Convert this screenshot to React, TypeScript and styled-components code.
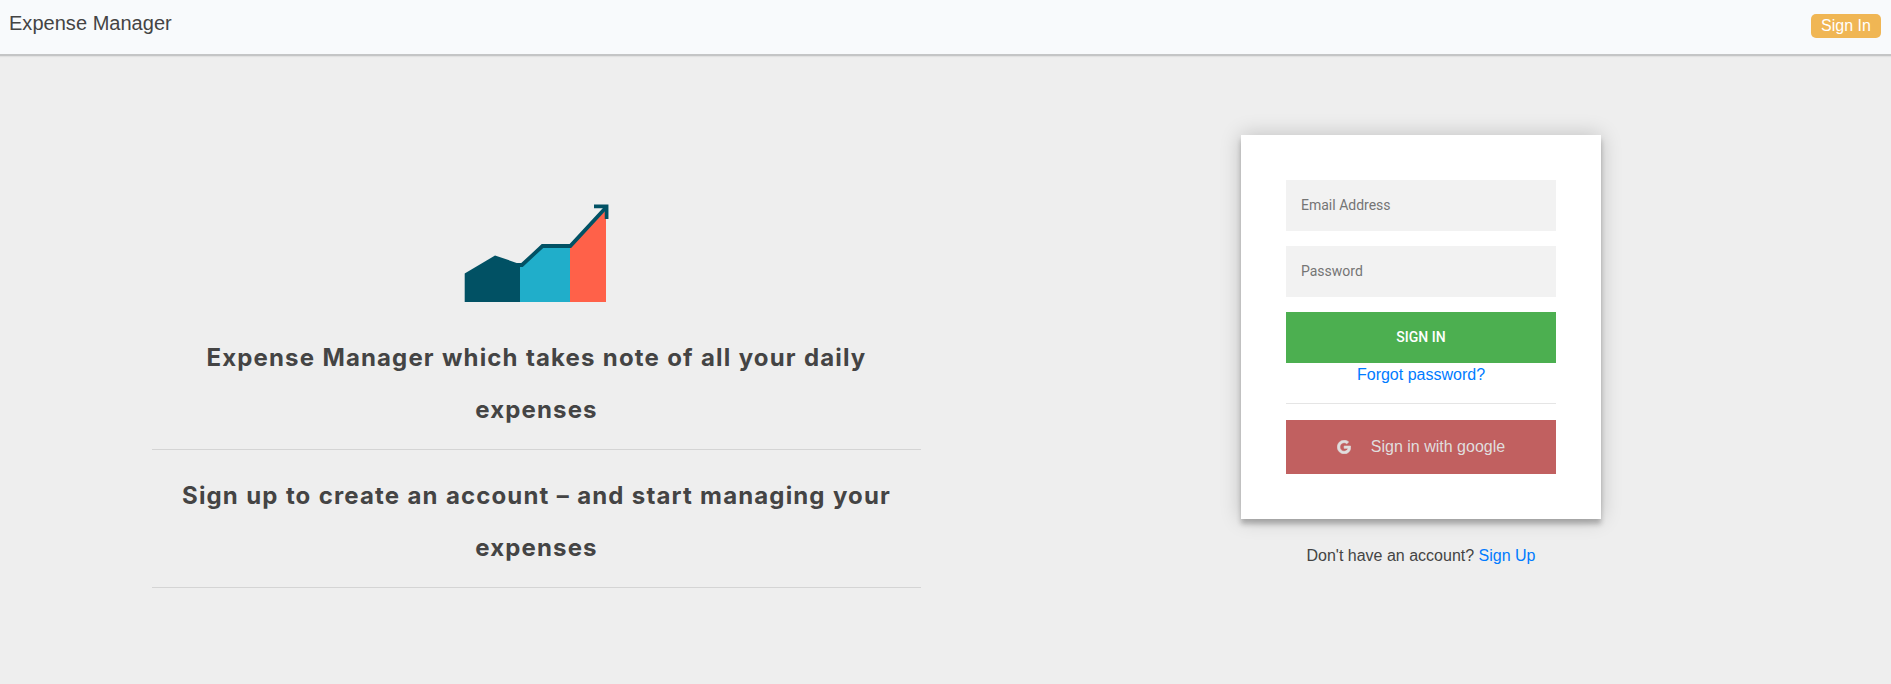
import React from 'react';
import styled, { createGlobalStyle } from 'styled-components';
import { FaGoogle } from 'react-icons/fa';

const GlobalStyle = createGlobalStyle`
  *, *::before, *::after { box-sizing: border-box; }
  body {
    margin: 0;
    background: #eee;
    color: #444;
    font: 16px/24px "Liberation Sans", Arial, sans-serif;
    overflow: hidden;
  }
`;

const Page = styled.div`
  min-height: 684px;
`;

const Header = styled.header`
  display: flex;
  justify-content: space-between;
  align-items: flex-start;
  height: 56px;
  padding: 0 10px 0 9px;
  background: #f8fafc;
  border-bottom: 2px solid #c4c5c6;
  box-shadow: 0 1px 1px rgba(0, 0, 0, 0.05);
`;

const Brand = styled.span`
  padding-top: 8px;
  font-size: 20px;
  line-height: 30px;
  letter-spacing: 0.03px;
`;

const NavButton = styled.button`
  width: 70px;
  height: 24px;
  margin-top: 14px;
  padding: 0 0 1px;
  border: 0;
  border-radius: 5px;
  background: #f0b654;
  color: #fff;
  font: 16px/22px "Liberation Sans", Arial, sans-serif;
`;

const Main = styled.main`
  display: flex;
  justify-content: space-between;
`;

const Intro = styled.section`
  display: flex;
  flex-direction: column;
  align-items: center;
  width: 769px;
  margin-left: 152px;
  padding-top: 148px;
`;

const Headline = styled.h2<{ $top: number }>`
  width: 100%;
  margin: 0;
  padding: ${(p) => p.$top}px 0 13px;
  border-bottom: 1px solid #d4d4d4;
  font: 700 24px/52px Inter, Roboto, sans-serif;
  letter-spacing: 1.13px;
  word-spacing: 0.5px;
  text-align: center;
  white-space: nowrap;
`;

const Account = styled.section`
  display: flex;
  flex-direction: column;
  align-items: center;
  width: 940px;
  padding-top: 79px;
`;

const Card = styled.form`
  display: flex;
  flex-direction: column;
  width: 360px;
  height: 384px;
  padding: 45px;
  background: #fff;
  box-shadow: 0 0 20px 0 rgba(0, 0, 0, 0.2), 0 5px 5px 0 rgba(0, 0, 0, 0.24);
`;

const Field = styled.input`
  width: 100%;
  height: 51px;
  margin: 0 0 15px;
  padding: 0 15px 1px;
  border: 0;
  outline: 0;
  background: #f2f2f2;
  font: 14px Roboto, sans-serif;
  &::placeholder { color: #757575; opacity: 1; }
`;

const SubmitButton = styled.button`
  height: 51px;
  padding: 0 0 1px;
  border: 0;
  background: #4caf50;
  color: #fff;
  font: 500 14px Roboto, sans-serif;
  text-transform: uppercase;
`;

const Link = styled.a`
  color: #007bff;
  text-decoration: none;
`;

const ForgotLink = styled(Link)`
  text-align: center;
`;

const Divider = styled.hr`
  width: 100%;
  height: 1px;
  margin: 16px 0;
  border: 0;
  background: #e5e5e5;
`;

const GoogleButton = styled.button`
  display: flex;
  align-items: center;
  justify-content: center;
  gap: 20px;
  height: 54px;
  padding: 0 0 1px;
  border: 0;
  background: #c16060;
  color: #e0dede;
  font: 16px "Liberation Sans", Arial, sans-serif;
`;

const GoogleIcon = styled(FaGoogle)`
  width: 14px;
  height: 14px;
  stroke: currentColor;
  stroke-width: 22px;
`;

const SignUpNote = styled.p`
  margin: 25px 0 0;
`;

function GrowthLogo() {
  return (
    <svg width="146" height="100" viewBox="0 0 146 100" aria-hidden="true">
      <path d="M.7 69.6 31 51.4l26 9V98H.7z" fill="#015164" />
      <path d="M56 62 78 43h29v55H56z" fill="#20aeca" />
      <path d="M106 43 142 6v92h-36z" fill="#ff6149" />
      <path d="M53 61h5L78.5 42h27.8L141.5 4" fill="none" stroke="#015164" strokeWidth="3.8" />
      <path d="M130 2.4h12.6v12.5" fill="none" stroke="#015164" strokeWidth="3.7" />
    </svg>
  );
}

export default function App() {
  return (
    <Page>
      <GlobalStyle />
      <Header>
        <Brand>Expense Manager</Brand>
        <NavButton>Sign In</NavButton>
      </Header>
      <Main>
        <Intro>
          <GrowthLogo />
          <Headline $top={28}>
            Expense Manager which takes note of all your daily<br />expenses
          </Headline>
          <Headline $top={20}>
            Sign up to create an account – and start managing your<br />expenses
          </Headline>
        </Intro>
        <Account>
          <Card>
            <Field type="email" placeholder="Email Address" />
            <Field type="password" placeholder="Password" />
            <SubmitButton type="button">Sign in</SubmitButton>
            <ForgotLink>Forgot password?</ForgotLink>
            <Divider />
            <GoogleButton type="button">
              <GoogleIcon />
              Sign in with google
            </GoogleButton>
          </Card>
          <SignUpNote>
            Don't have an account? <Link>Sign Up</Link>
          </SignUpNote>
        </Account>
      </Main>
    </Page>
  );
}
